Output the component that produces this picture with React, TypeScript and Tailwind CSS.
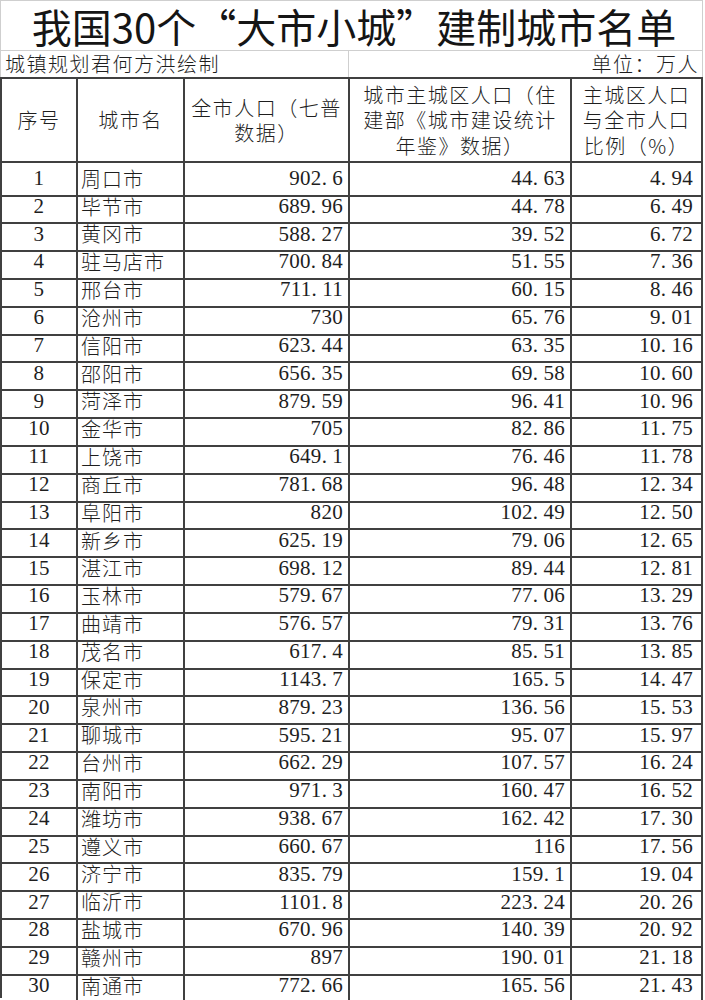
const rows: [string, string, string, string][] = [
  ["周口市", "902.6", "44.63", "4.94"],
  ["毕节市", "689.96", "44.78", "6.49"],
  ["黄冈市", "588.27", "39.52", "6.72"],
  ["驻马店市", "700.84", "51.55", "7.36"],
  ["邢台市", "711.11", "60.15", "8.46"],
  ["沧州市", "730", "65.76", "9.01"],
  ["信阳市", "623.44", "63.35", "10.16"],
  ["邵阳市", "656.35", "69.58", "10.60"],
  ["菏泽市", "879.59", "96.41", "10.96"],
  ["金华市", "705", "82.86", "11.75"],
  ["上饶市", "649.1", "76.46", "11.78"],
  ["商丘市", "781.68", "96.48", "12.34"],
  ["阜阳市", "820", "102.49", "12.50"],
  ["新乡市", "625.19", "79.06", "12.65"],
  ["湛江市", "698.12", "89.44", "12.81"],
  ["玉林市", "579.67", "77.06", "13.29"],
  ["曲靖市", "576.57", "79.31", "13.76"],
  ["茂名市", "617.4", "85.51", "13.85"],
  ["保定市", "1143.7", "165.5", "14.47"],
  ["泉州市", "879.23", "136.56", "15.53"],
  ["聊城市", "595.21", "95.07", "15.97"],
  ["台州市", "662.29", "107.57", "16.24"],
  ["南阳市", "971.3", "160.47", "16.52"],
  ["潍坊市", "938.67", "162.42", "17.30"],
  ["遵义市", "660.67", "116", "17.56"],
  ["济宁市", "835.79", "159.1", "19.04"],
  ["临沂市", "1101.8", "223.24", "20.26"],
  ["盐城市", "670.96", "140.39", "20.92"],
  ["赣州市", "897", "190.01", "21.18"],
  ["南通市", "772.66", "165.56", "21.43"],
];

const cjk = "font-['Noto_Sans_CJK_SC',sans-serif]";
const num = "font-['Liberation_Serif','Noto_Sans_CJK_SC',serif]";
const cols = "grid grid-cols-[76px_107px_165px_222px_131px] border-l-2 border-[#404040]";
const cell = "border-r-2 border-b-2 border-[#404040]";

// period in the sheet font sits in a half-width box, hence the gap after it
const Num = ({ v }: { v: string }) => {
  const [a, b] = v.split(".");
  return (
    <span className={`${num} text-[21px] tracking-[0.3px]`}>
      {a}
      {b !== undefined && (
        <>
          .<span className="ml-[5px]">{b}</span>
        </>
      )}
    </span>
  );
};

const Head = ({ lines }: { lines: string[] }) => (
  <div className={`${cell} flex flex-col items-center justify-center text-center leading-[25.5px] whitespace-nowrap`}>
    {lines.map((l) => (
      <span key={l}>{l}</span>
    ))}
  </div>
);

export default function App() {
  return (
    <div className="w-[705px] h-[1000px] overflow-hidden bg-white text-[#1e1e1e]">
      <div className="w-[703px]">
        <div className={`${cjk} h-[51px] border-t border-x border-b border-[#cfcfcf] flex items-center justify-center text-[40px] leading-none text-[#151515] pl-[5px]`}>
          我国30个“大市小城”建制城市名单
        </div>
        <div className={`${cjk} h-[26px] flex border-x border-[#cfcfcf] text-[20px] leading-none tracking-[1.5px] font-light`}>
          <div className="w-[348px] border-r border-[#cfcfcf] flex items-center pl-[4px]">城镇规划君何方洪绘制</div>
          <div className="flex-1 flex items-center justify-end pr-[3px]">单位：万人</div>
        </div>

        <div className="border-t-2 border-[#404040]">
          <div className={`${cols} ${cjk} h-[84px] text-[20px] tracking-[1.5px] font-light`}>
            <Head lines={["序号"]} />
            <Head lines={["城市名"]} />
            <Head lines={["全市人口（七普", "数据）"]} />
            <Head lines={["城市主城区人口（住", "建部《城市建设统计", "年鉴》数据）"]} />
            <Head lines={["主城区人口", "与全市人口", "比例（%）"]} />
          </div>

          {rows.map(([city, total, core, ratio], i) => (
            <div key={city} className={`${cols} h-[27.83px]`}>
              <div className={`${cell} flex items-center justify-center`}>
                <Num v={String(i + 1)} />
              </div>
              <div className={`${cell} ${cjk} flex items-center pl-[3px] text-[20px] tracking-[1px] whitespace-nowrap font-light`}>
                {city}
              </div>
              <div className={`${cell} flex items-center justify-end pr-[5px]`}>
                <Num v={total} />
              </div>
              <div className={`${cell} flex items-center justify-end pr-[5px]`}>
                <Num v={core} />
              </div>
              <div className={`${cell} flex items-center justify-end pr-[8px]`}>
                <Num v={ratio} />
              </div>
            </div>
          ))}
        </div>
      </div>
    </div>
  );
}
